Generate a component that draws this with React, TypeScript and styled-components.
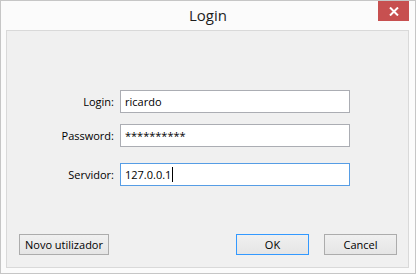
import React from "react";
import styled, { createGlobalStyle } from "styled-components";

const Global = createGlobalStyle`
  html, body { margin: 0; padding: 0; background: #ffffff; }
  body { font-family: "Open Sans", "Noto Sans", sans-serif; }
  * { box-sizing: border-box; }
`;

const Window = styled.div`
  width: 416px;
  height: 274px;
  display: flex;
  flex-direction: column;
  background: #fbfbfb;
  border: 1px solid #c6c6c6;
`;

const TitleBar = styled.div`
  position: relative;
  height: 29px;
  display: flex;
  align-items: center;
  justify-content: center;
  flex-shrink: 0;
`;

const Title = styled.div`
  font-size: 15px;
  color: #1e1e1e;
  margin-top: -1px;
`;

const CloseButton = styled.div`
  position: absolute;
  top: 0;
  right: 6px;
  width: 31px;
  height: 20px;
  background: #c75050;
  display: flex;
  align-items: center;
  justify-content: center;
`;

const Panel = styled.div`
  flex: 1;
  margin: 0 6px 5px 5px;
  background: #f0f0f0;
  border: 1px solid #d9d9d9;
  display: flex;
  flex-direction: column;
  padding: 59px 11px 12px 12px;
`;

const Form = styled.div`
  display: grid;
  grid-template-columns: 95px 230px;
  column-gap: 6px;
  align-items: center;
`;

const Label = styled.label<{ $top: number }>`
  text-align: right;
  font-size: 11px;
  color: #000;
  margin-top: ${(p) => p.$top}px;
`;

const Field = styled.div<{ $focused?: boolean; $top: number }>`
  height: 23px;
  border: 1px solid ${(p) => (p.$focused ? "#569de5" : "#abadb3")};
  background: #ffffff;
  font-size: 11px;
  color: #000;
  display: flex;
  align-items: center;
  padding-left: 4px;
  margin-top: ${(p) => p.$top}px;
`;

const Caret = styled.span`
  display: inline-block;
  width: 1px;
  height: 15px;
  background: #000;
  margin-left: 1px;
`;

const Buttons = styled.div`
  margin-top: auto;
  display: flex;
  align-items: center;
`;

const Button = styled.div<{ $primary?: boolean; $width?: number }>`
  height: 21px;
  width: ${(p) => (p.$width ? `${p.$width}px` : "auto")};
  padding: 0 ${(p) => (p.$width ? 0 : 5)}px;
  border: 1px solid ${(p) => (p.$primary ? "#3399ff" : "#acacac")};
  background: linear-gradient(#f0f0f0, #e5e5e5);
  font-size: 11px;
  color: #000;
  display: flex;
  align-items: center;
  justify-content: center;
`;

const Spacer = styled.div`
  flex: 1;
`;

const Gap = styled.div`
  width: 15px;
`;

export default function App() {
  return (
    <>
      <Global />
      <Window>
        <TitleBar>
          <Title>Login</Title>
          <CloseButton>
            <svg width="10" height="9" viewBox="0 0 10 9">
              <path d="M1 0.5 L9 8.5 M9 0.5 L1 8.5" stroke="#fff" strokeWidth="2" />
            </svg>
          </CloseButton>
        </TitleBar>
        <Panel>
          <Form>
            <Label $top={0}>Login:</Label>
            <Field $top={0}>ricardo</Field>
            <Label $top={11}>Password:</Label>
            <Field $top={11}>**********</Field>
            <Label $top={16}>Servidor:</Label>
            <Field $top={16} $focused>
              127.0.0.1
              <Caret />
            </Field>
          </Form>
          <Buttons>
            <Button>Novo utilizador</Button>
            <Spacer />
            <Button $primary $width={73}>OK</Button>
            <Gap />
            <Button $width={73}>Cancel</Button>
          </Buttons>
        </Panel>
      </Window>
    </>
  );
}
